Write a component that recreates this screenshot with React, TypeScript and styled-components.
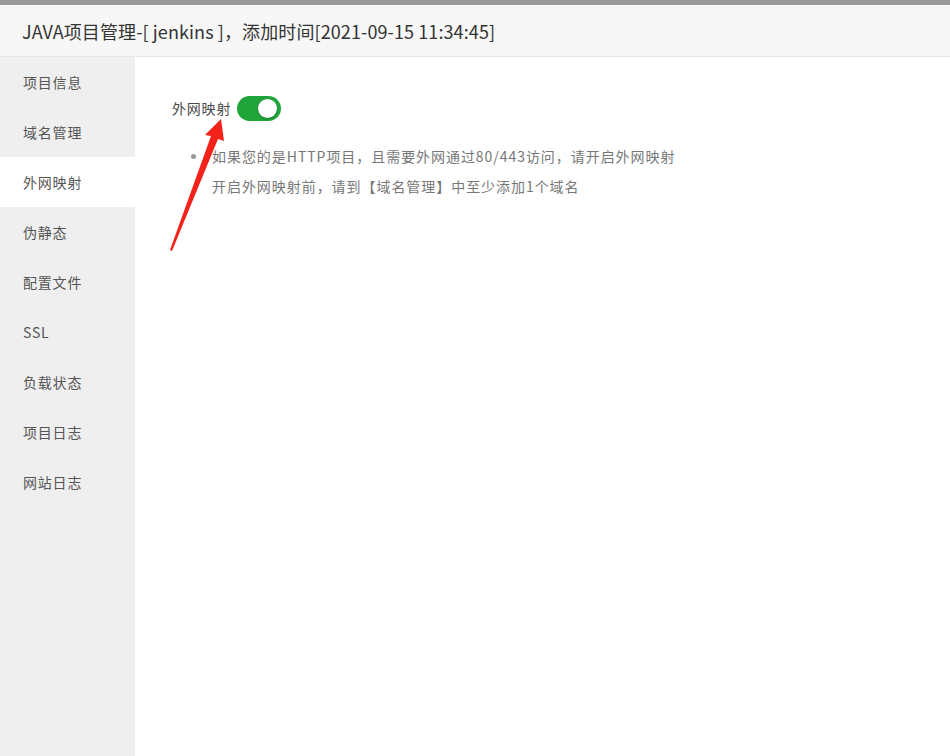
import { createGlobalStyle, styled } from "styled-components";

const GlobalStyle = createGlobalStyle`
  html, body {
    margin: 0;
    padding: 0;
    background: #fff;
  }
  body {
    font-family: "Microsoft YaHei", "Noto Sans CJK SC", "Noto Sans", sans-serif;
  }
`;

const Page = styled.div`
  position: relative;
  width: 950px;
  height: 756px;
  display: flex;
  flex-direction: column;
  overflow: hidden;
  border-top: 5px solid #999;
  box-sizing: border-box;
`;

const Header = styled.div`
  height: 51px;
  flex-shrink: 0;
  display: flex;
  align-items: center;
  padding-left: 22px;
  background: #f7f7f7;
  border-bottom: 1px solid #e6e6e6;
  font-size: 18px;
  letter-spacing: 0.1px;
  color: #333;
`;

const Body = styled.div`
  flex: 1;
  display: flex;
`;

const Sidebar = styled.ul`
  width: 135px;
  margin: 0;
  padding: 0;
  list-style: none;
  background: #efefef;
`;

const NavItem = styled.li<{ $active?: boolean }>`
  height: 50px;
  line-height: 50px;
  padding-left: 23px;
  font-size: 14px;
  letter-spacing: 0.8px;
  color: #555;
  background: ${(p) => (p.$active ? "#fff" : "transparent")};
  cursor: pointer;
`;

const Content = styled.div`
  flex: 1;
  padding: 38px 0 0 37px;
`;

const SwitchRow = styled.div`
  display: flex;
  align-items: center;
  gap: 6px;
  height: 26px;
`;

const Label = styled.span`
  font-size: 14px;
  letter-spacing: 0.8px;
  color: #4a4a4a;
`;

const Toggle = styled.span<{ $on: boolean }>`
  position: relative;
  width: 44px;
  height: 25px;
  border-radius: 13px;
  background: ${(p) => (p.$on ? "#20a53a" : "#ddd")};

  &::after {
    content: "";
    position: absolute;
    top: 3px;
    left: ${(p) => (p.$on ? "21px" : "3px")};
    width: 19px;
    height: 19px;
    border-radius: 50%;
    background: #fff;
    box-shadow: 0 1px 2px rgba(0, 0, 0, 0.25);
  }
`;

const Tips = styled.ul`
  margin: 20px 0 0;
  padding-left: 40px;
  list-style: none;
`;

const Tip = styled.li`
  position: relative;
  line-height: 30px;
  font-size: 14px;
  letter-spacing: 0.95px;
  color: #777;

  &::before {
    content: "";
    position: absolute;
    left: -21px;
    top: 13px;
    width: 5px;
    height: 5px;
    border-radius: 50%;
    background: #999;
  }
`;

const Arrow = styled.svg`
  position: absolute;
  left: 0;
  top: 0;
  pointer-events: none;
`;

const navItems = [
  "项目信息",
  "域名管理",
  "外网映射",
  "伪静态",
  "配置文件",
  "SSL",
  "负载状态",
  "项目日志",
  "网站日志",
];

export default function App() {
  return (
    <>
      <GlobalStyle />
      <Page>
        <Header>JAVA项目管理-[ jenkins ]，添加时间[2021-09-15 11:34:45]</Header>
        <Body>
          <Sidebar>
            {navItems.map((n) => (
              <NavItem key={n} $active={n === "外网映射"}>
                {n}
              </NavItem>
            ))}
          </Sidebar>
          <Content>
            <SwitchRow>
              <Label>外网映射</Label>
              <Toggle $on />
            </SwitchRow>
            <Tips>
              <Tip>
                如果您的是HTTP项目，且需要外网通过80/443访问，请开启外网映射
                <br />
                开启外网映射前，请到【域名管理】中至少添加1个域名
              </Tip>
            </Tips>
          </Content>
        </Body>
        <Arrow width="950" height="756" viewBox="0 0 950 756">
          <polygon
            points="221,114 224,136 218,134 172,246 170,245 211,131 205,130"
            fill="#f5221b"
          />
        </Arrow>
      </Page>
    </>
  );
}
